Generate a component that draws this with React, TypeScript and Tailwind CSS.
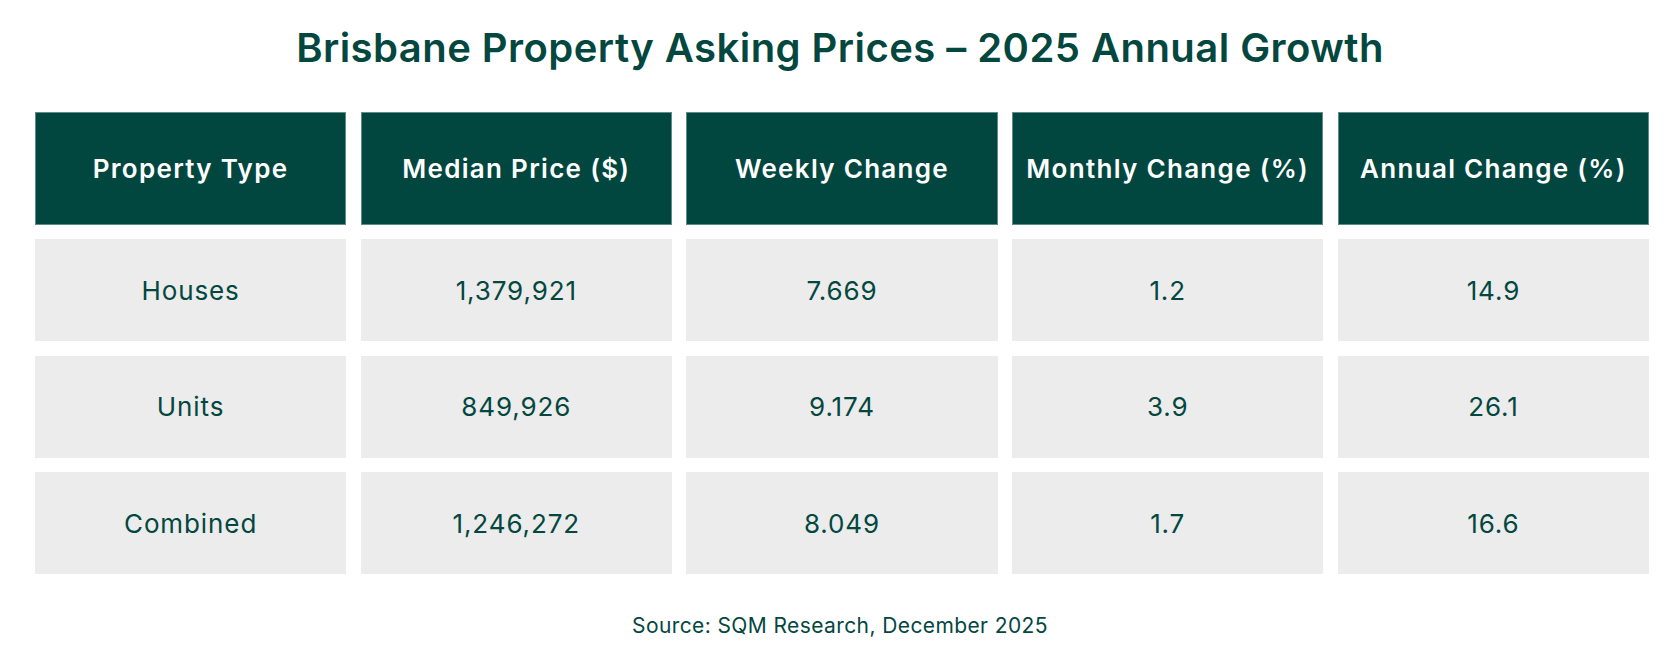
const headers = ['Property Type', 'Median Price ($)', 'Weekly Change', 'Monthly Change (%)', 'Annual Change (%)'];

const rows = [
  ['Houses', '1,379,921', '7.669', '1.2', '14.9'],
  ['Units', '849,926', '9.174', '3.9', '26.1'],
  ['Combined', '1,246,272', '8.049', '1.7', '16.6'],
];

export default function App() {
  return (
    <div className="w-[1680px] h-[658px] bg-white font-['Inter',sans-serif] text-[#03473f]">
      <h1 className="pt-[25px] h-[112px] text-center text-[40px] leading-[46px] font-semibold tracking-[0.45px]">
        Brisbane Property Asking Prices – 2025 Annual Growth
      </h1>

      <div className="pl-[35px] pr-[31px] flex flex-col gap-[14.5px]">
        <div className="grid grid-cols-5 gap-[14.5px]">
          {headers.map((h) => (
            <div
              key={h}
              className="h-[112.5px] flex items-center justify-center bg-[#02473f] border border-[#5e8c89] text-white text-[26px] font-semibold tracking-[1.3px]"
            >
              {h}
            </div>
          ))}
        </div>

        {rows.map((row) => (
          <div key={row[0]} className="grid grid-cols-5 gap-[14.5px]">
            {row.map((cell, i) => (
              <div
                key={i}
                className="h-[102px] flex items-center justify-center bg-[#ececec] text-[26px] tracking-[0.9px]"
              >
                {cell}
              </div>
            ))}
          </div>
        ))}
      </div>

      <p className="mt-[38px] text-center text-[21px] leading-[28px] tracking-[0.4px]">
        Source: SQM Research, December 2025
      </p>
    </div>
  );
}
